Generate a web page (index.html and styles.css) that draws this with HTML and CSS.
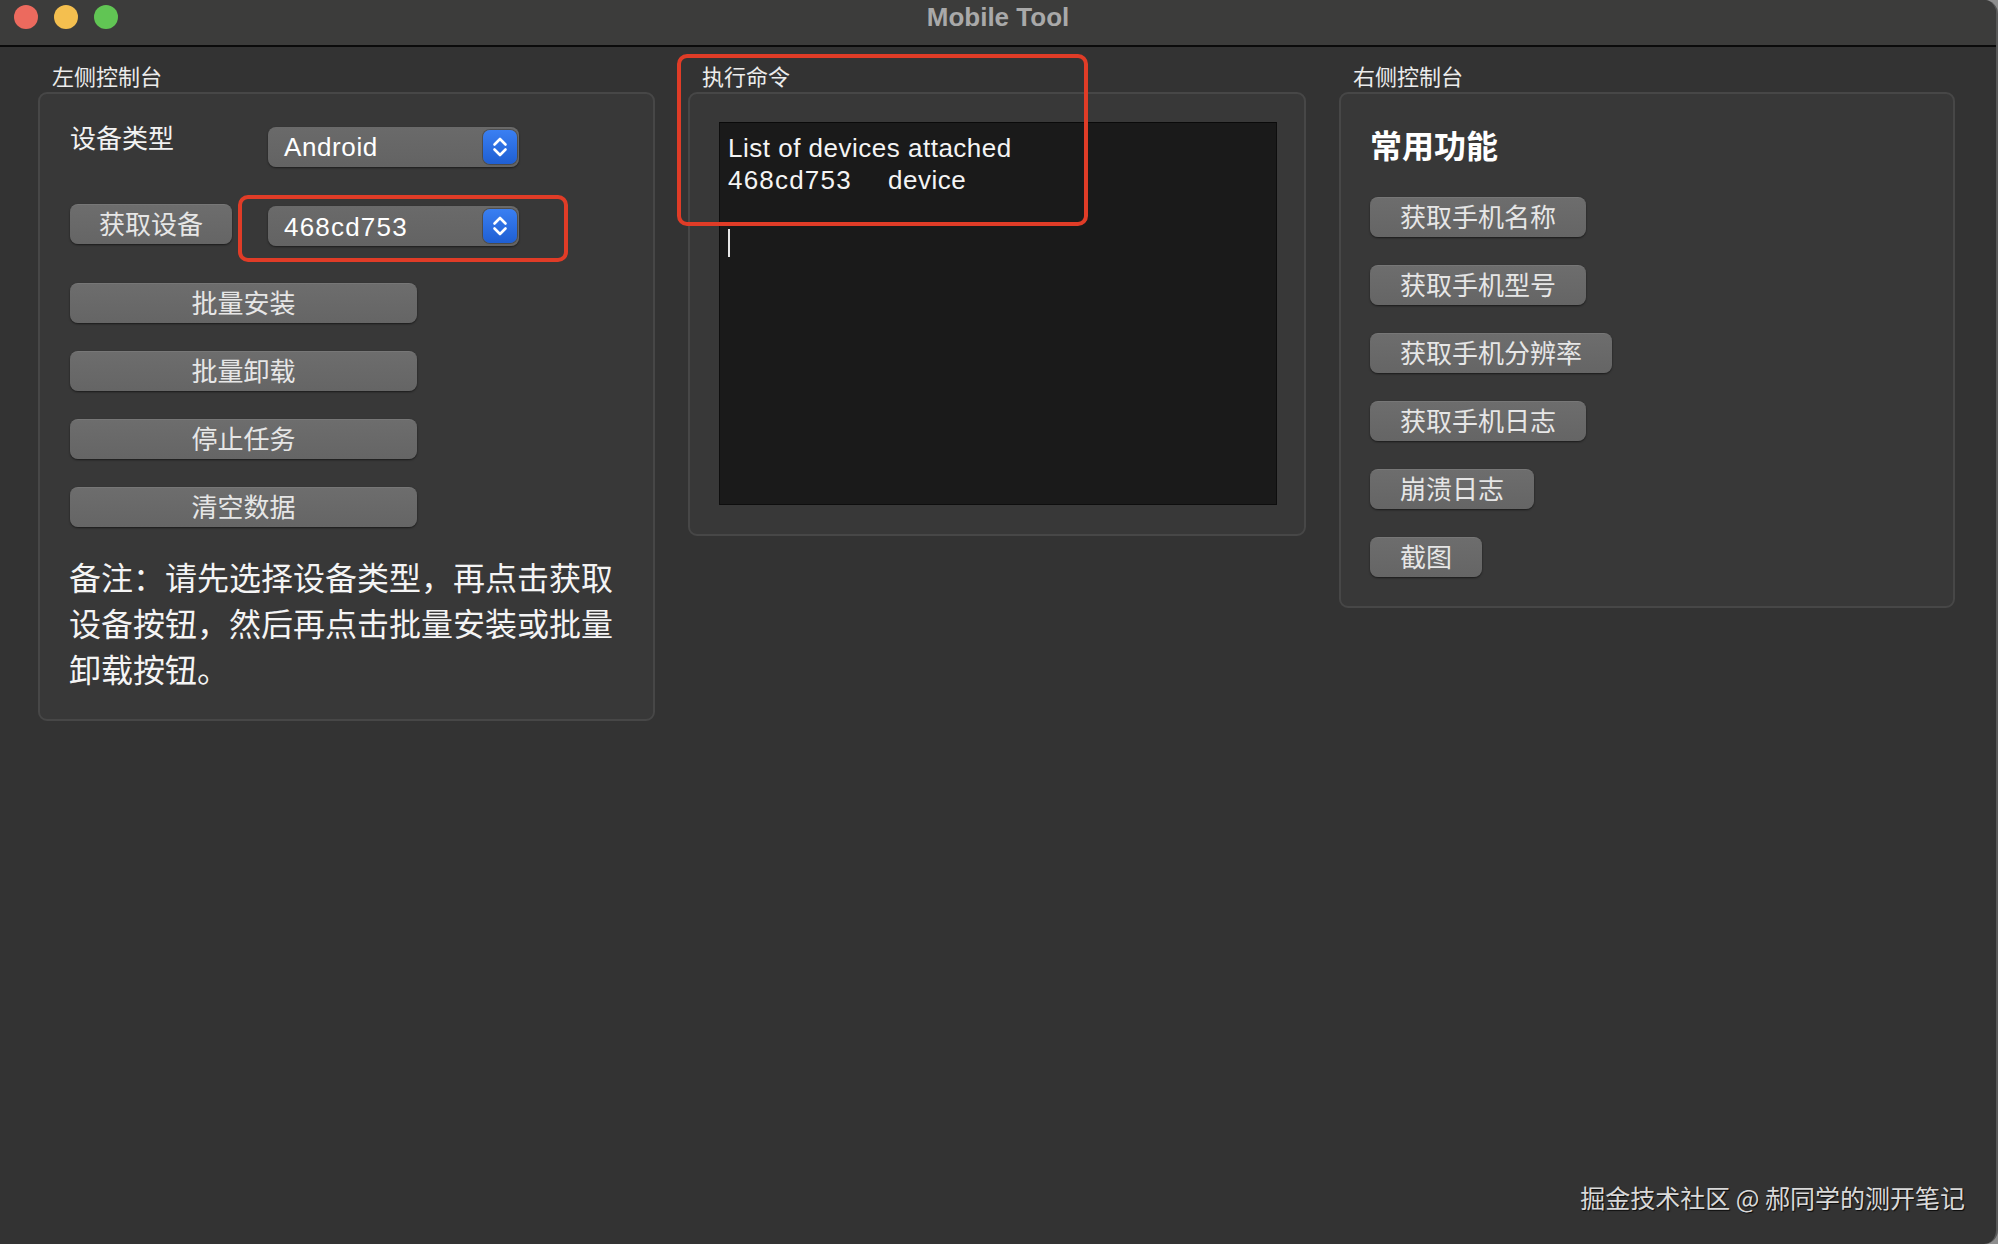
FILE: index.html
```html
<!DOCTYPE html>
<html lang="zh-CN">
<head>
<meta charset="utf-8">
<title>Mobile Tool</title>
<link rel="stylesheet" href="styles.css">
</head>
<body>
<div class="window">
  <header class="titlebar">
    <div class="lights">
      <span class="light close"></span>
      <span class="light minimize"></span>
      <span class="light zoom"></span>
    </div>
    <div class="title">Mobile Tool</div>
    <div></div>
  </header>

  <main class="panes">
    <!-- left console: device selection and batch actions -->
    <section class="pane">
      <div class="pane-label">左侧控制台</div>
      <div class="group left-group">
        <div class="row row-type">
          <span class="field-label">设备类型</span>
          <div class="combo">
            <span class="combo-text">Android</span>
            <span class="stepper">
              <svg viewBox="0 0 34 34" width="34" height="34"><path d="M11.5 14.5 L17 9 L22.5 14.5 M11.5 19.5 L17 25 L22.5 19.5" fill="none" stroke="#fff" stroke-width="2.6" stroke-linecap="round" stroke-linejoin="round"/></svg>
            </span>
          </div>
        </div>
        <div class="row row-device">
          <button class="btn">获取设备</button>
          <div class="combo combo-device">
            <span class="combo-text">468cd753</span>
            <span class="stepper">
              <svg viewBox="0 0 34 34" width="34" height="34"><path d="M11.5 14.5 L17 9 L22.5 14.5 M11.5 19.5 L17 25 L22.5 19.5" fill="none" stroke="#fff" stroke-width="2.6" stroke-linecap="round" stroke-linejoin="round"/></svg>
            </span>
            <span class="mark mark-device"></span>
          </div>
        </div>
        <button class="btn wide">批量安装</button>
        <button class="btn wide">批量卸载</button>
        <button class="btn wide">停止任务</button>
        <button class="btn wide">清空数据</button>
        <p class="note">备注：请先选择设备类型，再点击获取设备按钮，然后再点击批量安装或批量卸载按钮。</p>
      </div>
    </section>

    <!-- middle: command output -->
    <section class="pane pane-middle">
      <div class="pane-label">执行命令</div>
      <div class="group console-group">
        <div class="console">
          <div class="line">List of devices attached</div>
          <div class="line"><span class="serial">468cd753</span>device</div>
          <div class="line"></div>
          <div class="line"><span class="caret"></span></div>
        </div>
      </div>
      <span class="mark mark-console"></span>
    </section>

    <!-- right console: common functions -->
    <section class="pane">
      <div class="pane-label">右侧控制台</div>
      <div class="group right-group">
        <h2 class="heading">常用功能</h2>
        <button class="btn">获取手机名称</button>
        <button class="btn">获取手机型号</button>
        <button class="btn">获取手机分辨率</button>
        <button class="btn">获取手机日志</button>
        <button class="btn">崩溃日志</button>
        <button class="btn">截图</button>
      </div>
    </section>
  </main>

  <div class="watermark">掘金技术社区 @ 郝同学的测开笔记</div>
</div>
</body>
</html>
```

FILE: styles.css
```css
* {
  box-sizing: border-box;
}

html, body {
  margin: 0;
  padding: 0;
}

body {
  background: #8e8e8e;
  font-family: "Liberation Sans", "Noto Sans CJK SC", sans-serif;
  color: #ececec;
}

.window {
  position: relative;
  width: 1998px;
  height: 1244px;
  background: #333333;
  border-right: 2px solid #585858;
  border-radius: 0 14px 14px 0;
  overflow: hidden;
}

/* ---------- title bar ---------- */
.titlebar {
  height: 47px;
  display: grid;
  grid-template-columns: 1fr auto 1fr;
  align-items: start;
  background: #3c3c3b;
  border-bottom: 2px solid #0b0b0b;
}

.lights {
  display: flex;
  gap: 16px;
  padding: 5px 0 0 14px;
}

.light {
  width: 24px;
  height: 24px;
  border-radius: 50%;
}

.light.close { background: #ec6a5e; }
.light.minimize { background: #f4bf4f; }
.light.zoom { background: #61c554; }

.title {
  font-family: "Liberation Sans", sans-serif;
  font-weight: bold;
  font-size: 26px;
  line-height: 34px;
  color: #a9a9a9;
}

/* ---------- panes ---------- */
.panes {
  display: grid;
  grid-template-columns: 617px 618px 616px;
  column-gap: 33px;
  padding-left: 38px;
  align-items: start;
}

.pane {
  position: relative;
}

.pane-label {
  font-family: "Noto Sans CJK SC", sans-serif;
  font-size: 22px;
  line-height: 28px;
  padding: 14px 0 0 14px;
  margin-bottom: 3px;
  color: #ececec;
}

.group {
  background: #383838;
  border: 2px solid #474747;
  border-radius: 9px;
}

/* ---------- controls ---------- */
.btn {
  display: flex;
  align-items: center;
  justify-content: center;
  height: 40px;
  padding: 0 29px 4px 29px;
  margin: 0;
  font-family: "Noto Sans CJK SC", sans-serif;
  font-size: 26px;
  line-height: 1;
  color: #e6e6e6;
  background: linear-gradient(#6d6d6d, #656565);
  border: none;
  border-top: 1px solid #777777;
  border-radius: 8px;
  box-shadow: 0 1px 2px rgba(0, 0, 0, 0.55);
}

.combo {
  position: relative;
  display: flex;
  align-items: center;
  justify-content: space-between;
  width: 251px;
  height: 40px;
  padding: 0 2px 0 16px;
  background: linear-gradient(#6a6a6a, #636363);
  border-radius: 8px;
  box-shadow: 0 1px 2px rgba(0, 0, 0, 0.5);
}

.combo-text {
  font-family: "Liberation Sans", sans-serif;
  font-size: 26px;
  line-height: 40px;
  letter-spacing: 0.6px;
  color: #ffffff;
}

.combo-device .combo-text {
  letter-spacing: 1.2px;
  padding-top: 2px;
}

.stepper {
  display: block;
  width: 34px;
  height: 34px;
  border-radius: 7px;
  background: linear-gradient(#3a7ff2, #1f5fd3);
  box-shadow: 0 0 0 1px rgba(0, 0, 0, 0.25);
}

.stepper svg {
  display: block;
}

/* red call-out frames drawn over the controls */
.mark {
  position: absolute;
  border: 4px solid #e03c27;
  border-radius: 10px;
  pointer-events: none;
}

.mark-device {
  left: -30px;
  top: -11px;
  right: -49px;
  bottom: -16px;
}

.mark-console {
  left: -11px;
  top: 7px;
  width: 411px;
  height: 172px;
}

/* ---------- left group ---------- */
.left-group {
  display: flex;
  flex-direction: column;
  align-items: flex-start;
  padding: 33px 30px 28px 30px;
}

.row {
  display: grid;
  grid-template-columns: 198px 251px;
  align-items: start;
}

.field-label {
  font-family: "Noto Sans CJK SC", sans-serif;
  font-size: 26px;
  line-height: 30px;
  margin-top: -5px;
  color: #f2f2f2;
}

.row-device {
  margin-top: 37px;
}

.row-device .btn {
  justify-self: start;
}

.combo-device {
  margin-top: 2px;
}

.btn.wide {
  width: 347px;
  margin-top: 28px;
}

.row-device + .btn.wide {
  margin-top: 37px;
}

.note {
  width: 552px;
  margin: 26px 0 0 -1px;
  font-family: "Noto Sans CJK SC", sans-serif;
  font-size: 32px;
  line-height: 46px;
  color: #f4f4f4;
}

/* ---------- console ---------- */
.console-group {
  padding: 28px 27px 29px 29px;
}

.console {
  height: 383px;
  padding: 9px 8px;
  background: #1a1a1a;
  border: 1px solid #0e0e0e;
  border-top-color: #0a0a0a;
}

.line {
  height: 32px;
  font-family: "Liberation Sans", sans-serif;
  font-size: 26px;
  line-height: 32px;
  letter-spacing: 0.5px;
  color: #f4f4f4;
  white-space: pre;
}

.serial {
  display: inline-block;
  width: 160px;
  letter-spacing: 1.2px;
}

.caret {
  display: inline-block;
  width: 2px;
  height: 28px;
  margin-top: 1px;
  vertical-align: top;
  background: #e8e8e8;
}

/* ---------- right group ---------- */
.right-group {
  display: flex;
  flex-direction: column;
  align-items: flex-start;
  gap: 28px;
  padding: 27px 29px 29px 29px;
}

.right-group .btn {
  padding: 0 30px 4px 30px;
}

.heading {
  margin: 0 0 2px 0;
  font-family: "Noto Sans CJK SC", sans-serif;
  font-weight: bold;
  font-size: 32px;
  line-height: 46px;
  color: #ffffff;
}

/* ---------- footer mark ---------- */
.watermark {
  position: absolute;
  right: 31px;
  bottom: 32px;
  font-family: "Noto Sans CJK SC", sans-serif;
  font-size: 25px;
  line-height: 30px;
  color: #d9d9d9;
  text-shadow: 1px 1px 1px rgba(0, 0, 0, 0.8);
}
```
